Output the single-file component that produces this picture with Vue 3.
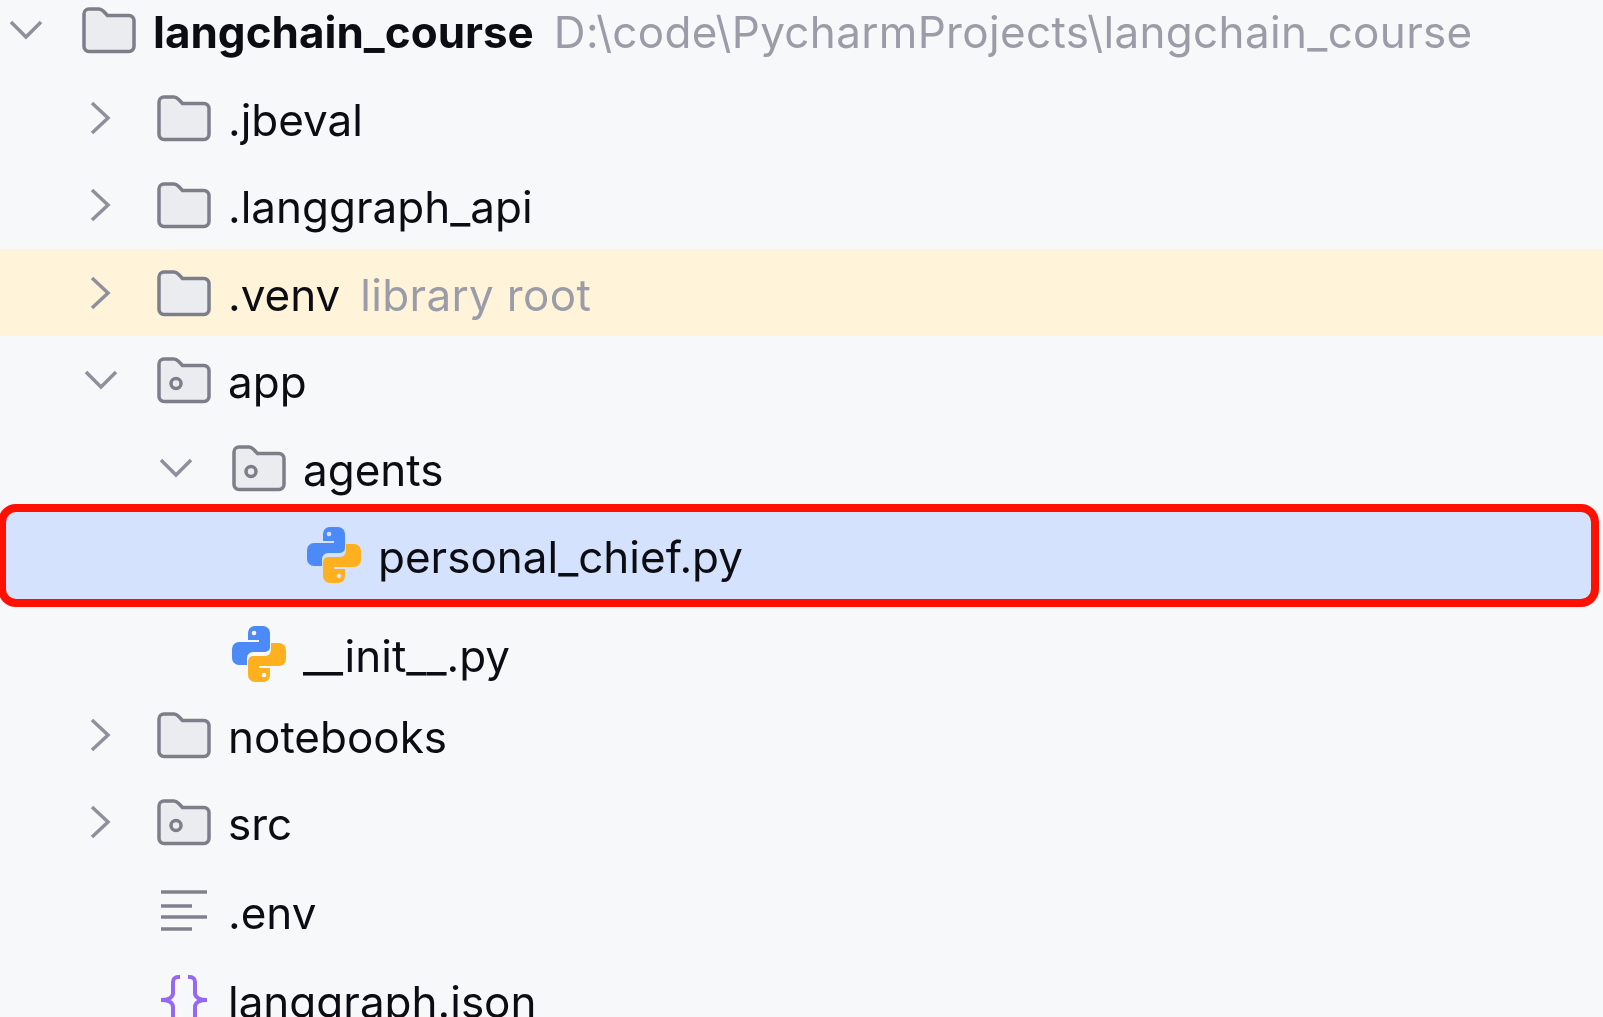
<script setup>
const rows = [
  { name: 'langchain_course', depth: 0, arrow: 'down', icon: 'folder', hint: 'D:\\code\\PycharmProjects\\langchain_course', cls: 'root' },
  { name: '.jbeval', depth: 1, arrow: 'right', icon: 'folder' },
  { name: '.langgraph_api', depth: 1, arrow: 'right', icon: 'folder' },
  { name: '.venv', depth: 1, arrow: 'right', icon: 'folder', hint: 'library root', cls: 'excluded' },
  { name: 'app', depth: 1, arrow: 'down', icon: 'source' },
  { name: 'agents', depth: 2, arrow: 'down', icon: 'source' },
  { name: 'personal_chief.py', depth: 3, icon: 'python', cls: 'selected' },
  { name: '__init__.py', depth: 2, icon: 'python', cls: 'after-selected' },
  { name: 'notebooks', depth: 1, arrow: 'right', icon: 'folder', cls: 'pull-up' },
  { name: 'src', depth: 1, arrow: 'right', icon: 'source' },
  { name: '.env', depth: 1, icon: 'text', cls: 'env' },
  { name: 'langgraph.json', depth: 1, icon: 'json', cls: 'json' }
]
</script>

<template>
  <div class="panel">
    <ul class="tree">
      <li
        v-for="row in rows"
        :key="row.name"
        class="row"
        :class="row.cls"
        :style="{ paddingLeft: 9 + row.depth * 75 + 'px' }"
      >
        <span class="arrow">
          <svg v-if="row.arrow === 'right'" width="34" height="34" viewBox="0 0 34 34">
            <path d="M8 2 L24 17 L8 32" />
          </svg>
          <svg v-else-if="row.arrow === 'down'" width="34" height="34" viewBox="0 0 34 34">
            <path d="M2 9 L17 24 L32 9" />
          </svg>
        </span>

        <svg class="icon" width="54" height="56" viewBox="0 0 54 56">
          <g v-if="row.icon === 'folder' || row.icon === 'source'" class="folder">
            <path d="M2 12 a5 5 0 0 1 5-5 h10 c2 0 3 .8 4.5 2.2 l4 4.3 h21.500 a5 5 0 0 1 5 5 v26 a5 5 0 0 1 -5 5 H7 a5 5 0 0 1 -5-5 Z" />
            <circle v-if="row.icon === 'source'" cx="19" cy="31.500" r="5" />
          </g>
          <g v-else-if="row.icon === 'python'">
            <path class="py-blue" d="M22 0 h9 a7 7 0 0 1 7 7 v14 a5 5 0 0 1 -5 5 H21 a6 6 0 0 0 -6 6 v7 H7 a7 7 0 0 1 -7-7 V23 a7 7 0 0 1 7-7 H27 v-2 H16 V7 a7 7 0 0 1 6-7 Z" />
            <path class="py-yellow" d="M22 0 h9 a7 7 0 0 1 7 7 v14 a5 5 0 0 1 -5 5 H21 a6 6 0 0 0 -6 6 v7 H7 a7 7 0 0 1 -7-7 V23 a7 7 0 0 1 7-7 H27 v-2 H16 V7 a7 7 0 0 1 6-7 Z" transform="rotate(180 27 28)" />
            <circle class="py-eye" cx="22" cy="7" r="2.300" />
            <circle class="py-eye" cx="32" cy="49" r="2.300" />
          </g>
          <g v-else-if="row.icon === 'text'" class="lines">
            <path d="M4 9 H50 M4 23 H35 M4 34 H50 M4 46 H35" />
          </g>
          <g v-else-if="row.icon === 'json'" class="braces">
            <path d="M23 5 h-2 a5 5 0 0 0 -5 5 v11 c0 4 -4 7 -12 7 c8 0 12 3 12 7 v11 a5 5 0 0 0 5 5 h2" />
            <path d="M31 5 h2 a5 5 0 0 1 5 5 v11 c0 4 4 7 12 7 c-8 0 -12 3 -12 7 v11 a5 5 0 0 1 -5 5 h-2" />
          </g>
        </svg>

        <span class="name">{{ row.name }}</span>
        <span v-if="row.hint" class="hint">{{ row.hint }}</span>
      </li>
    </ul>
  </div>
</template>

<style scoped>
.panel {
  width: 1603px;
  height: 1017px;
  overflow: hidden;
  background-color: #f7f8fa;
  font-family: Inter, "Noto Sans", sans-serif;
  filter: blur(0.4px);
}

.tree {
  list-style: none;
  margin: -13.75px 0 0;
  padding: 0;
}

.row {
  display: flex;
  align-items: center;
  box-sizing: border-box;
  height: 87.5px;
  font-size: 44px;
  color: #0b0d12;
  white-space: nowrap;
}

.arrow {
  flex: none;
  width: 34px;
  height: 34px;
  margin-right: 39px;
}

.arrow svg {
  display: block;
}

.arrow path {
  fill: none;
  stroke: #8e919c;
  stroke-width: 3.500;
}

.icon {
  flex: none;
  margin-right: 17px;
}

.folder path,
.folder circle {
  fill: #ebecf0;
  stroke: #7c7f8a;
  stroke-width: 3.500;
}

.lines path {
  fill: none;
  stroke: #7f828d;
  stroke-width: 3.500;
}

.braces path {
  fill: none;
  stroke: #9668f2;
  stroke-width: 4;
}

.py-blue {
  fill: #4c8bf7;
}

.py-yellow {
  fill: #ffb01f;
}

.py-eye {
  fill: #f7f8fa;
}

.name {
  flex: none;
  padding-top: 4px;
}

.hint {
  flex: none;
  margin-left: 20px;
  padding-top: 4px;
  letter-spacing: 0.33px;
  color: #9a9da7;
}

.root .name {
  font-weight: 700;
}

.excluded {
  background-color: #fff3da;
}

.selected {
  width: 1601px;
  height: 103px;
  margin-top: -7.75px;
  margin-left: -2px;
  border: 8px solid #ff1000;
  border-radius: 18px;
  background-color: #d4e2fd;
}

.selected .arrow {
  margin-left: -6px;
}

.selected .py-eye {
  fill: #d4e2fd;
}

.after-selected {
  margin-top: 3.750px;
}

.pull-up {
  margin-top: -7px;
}

.env {
  margin-top: 1.500px;
}

.json {
  margin-top: 1.500px;
}
</style>
